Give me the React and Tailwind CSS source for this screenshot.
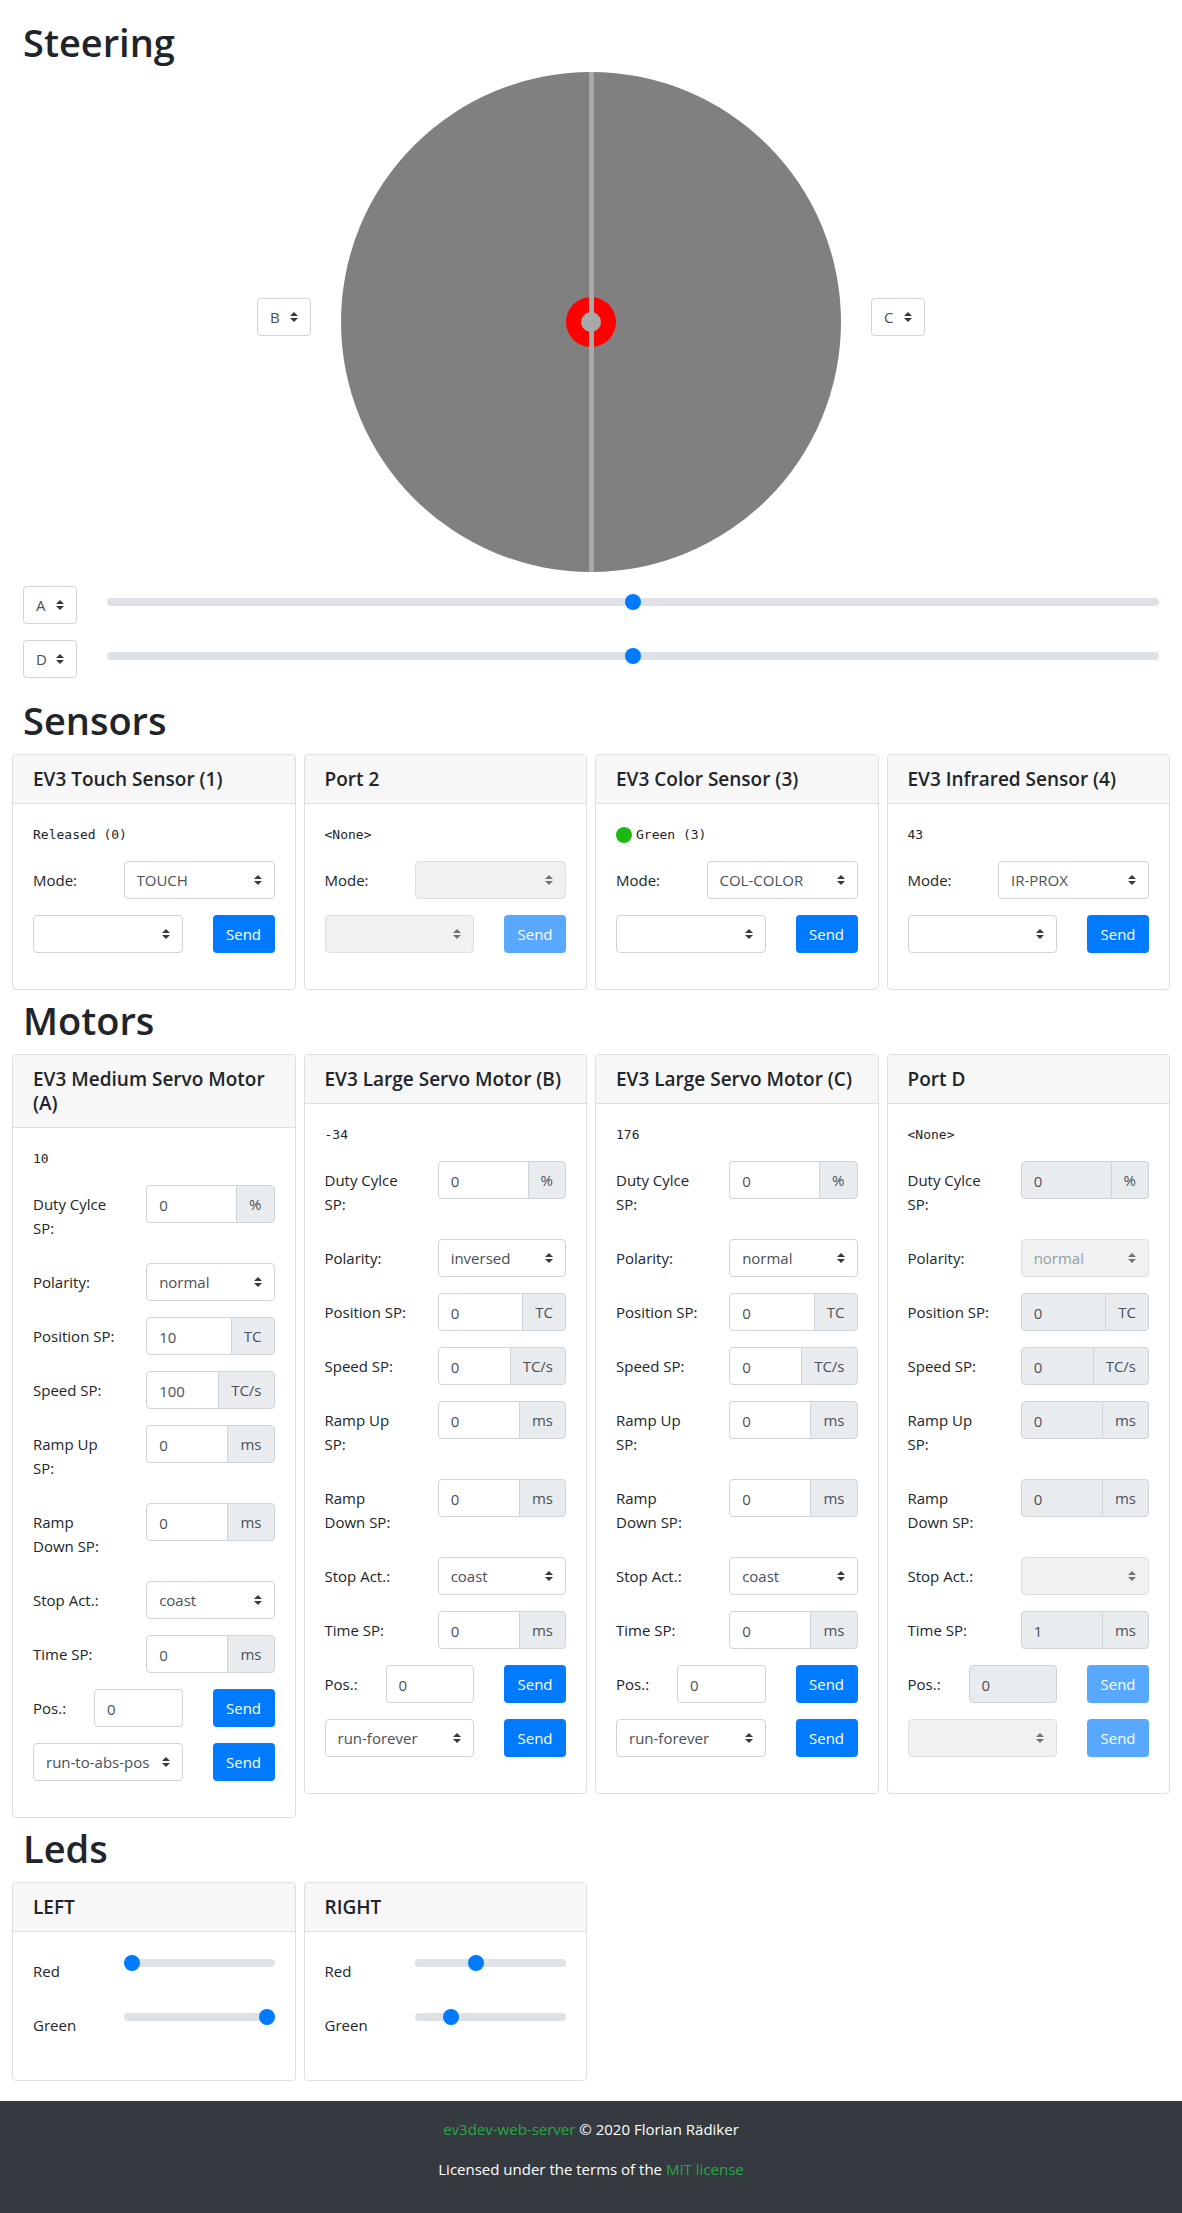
import { useId } from "react";

function Select({ value = "", options, disabled = false, label, id, className = "" }) {
  const items = options || [value];
  return (
    <div className={`relative ${disabled ? "opacity-70" : ""} ${className}`}>
      <select
        id={id}
        aria-label={label}
        defaultValue={value}
        disabled={disabled}
        className="block h-[38px] w-full appearance-none rounded border border-[#ced4da] bg-white pr-6 pl-3 text-[15px] leading-6 text-[#495057] disabled:bg-[#e9ecef] disabled:text-[#6c757d] disabled:opacity-100"
      >
        {items.map((o) => (
          <option key={o} value={o}>
            {o}
          </option>
        ))}
      </select>
      <svg
        viewBox="0 0 4 5"
        aria-hidden="true"
        className="pointer-events-none absolute top-[14px] right-[13px] h-[10px] w-2"
      >
        <path fill="#343a40" d="M2 0L0 2h4zm0 5L0 3h4z" />
      </svg>
    </div>
  );
}

function Range({ label, id, value, max = 100 }) {
  return (
    <input
      type="range"
      id={id}
      aria-label={label}
      min="0"
      max={max}
      defaultValue={value}
      className="block h-[22px] w-full appearance-none bg-transparent [&::-webkit-slider-runnable-track]:h-2 [&::-webkit-slider-runnable-track]:rounded-full [&::-webkit-slider-runnable-track]:bg-[#dee2e6] [&::-webkit-slider-thumb]:-mt-1 [&::-webkit-slider-thumb]:h-4 [&::-webkit-slider-thumb]:w-4 [&::-webkit-slider-thumb]:appearance-none [&::-webkit-slider-thumb]:rounded-full [&::-webkit-slider-thumb]:bg-[#007bff]"
    />
  );
}

function SendButton({ disabled }) {
  return (
    <button
      type="button"
      disabled={disabled}
      className="h-[38px] w-[62px] shrink-0 rounded bg-[#007bff] text-[15px] leading-6 text-white disabled:opacity-65"
    >
      Send
    </button>
  );
}

function Heading({ children }) {
  return <h1 className="px-[15px] pt-[2px] pb-[6px] text-[38px] leading-[48px] font-semibold">{children}</h1>;
}

function Card({ title, children }) {
  return (
    <section className="m-1 rounded border border-[#dfdfdf] bg-white">
      <header className="rounded-t-[3px] border-b border-[#dfdfdf] bg-[#f7f7f7] px-5 py-3">
        <h5 className="text-[19px] leading-6 font-semibold">{title}</h5>
      </header>
      <div className="p-5">{children}</div>
    </section>
  );
}

function Reading({ children }) {
  return (
    <pre className="mb-4 flex items-center font-['DejaVu_Sans_Mono',monospace] text-[13px] leading-[21px]">
      {children}
    </pre>
  );
}

function Cards({ children }) {
  return <div className="grid grid-cols-4 items-start">{children}</div>;
}

const labelClass = "py-[7px] leading-6";

function Sensor({ title, reading, dot, mode, disabled }) {
  const id = useId();
  return (
    <Card title={title}>
      <Reading>
        {dot && <span className="mr-1 h-4 w-4 rounded-full bg-[#1cba11]" />}
        {reading}
      </Reading>
      <div className="-mx-[15px] mb-4 flex">
        <div className="w-1/3 px-[15px]">
          <label htmlFor={id} className={`block ${labelClass}`}>
            Mode:
          </label>
        </div>
        <div className="w-2/3 px-[15px]">
          <Select id={id} value={mode} disabled={disabled} />
        </div>
      </div>
      <div className="mb-4 flex gap-[30px]">
        <Select label="Command" disabled={disabled} className="min-w-0 flex-1" />
        <SendButton disabled={disabled} />
      </div>
    </Card>
  );
}

const inputClass =
  "block h-[38px] w-full min-w-0 flex-1 border border-[#ced4da] bg-white px-3 pt-[7px] pb-[5px] text-[15px] leading-6 text-[#495057] disabled:bg-[#e9ecef]";

function Field({ label, value, unit, disabled }) {
  const id = useId();
  return (
    <div className="-mx-[15px] mb-4 flex">
      <div className="w-5/12 px-[15px]">
        <label htmlFor={id} className={`block ${labelClass}`}>
          {label}
        </label>
      </div>
      <div className="w-7/12 px-[15px]">
        {unit ? (
          <div className="flex">
            <input
              id={id}
              type="text"
              defaultValue={value}
              disabled={disabled}
              className={`${inputClass} rounded-l`}
            />
            <span className="-ml-px h-[38px] rounded-r border border-[#ced4da] bg-[#e9ecef] px-3 py-[6px] leading-6 text-[#495057]">
              {unit}
            </span>
          </div>
        ) : (
          <Select id={id} value={value} disabled={disabled} />
        )}
      </div>
    </div>
  );
}

function Motor({ title, reading, polarity, position, speed, stop, time, command, disabled }) {
  const id = useId();
  return (
    <Card title={title}>
      <Reading>{reading}</Reading>
      <Field label="Duty Cylce SP:" value="0" unit="%" disabled={disabled} />
      <Field label="Polarity:" value={polarity} disabled={disabled} />
      <Field label="Position SP:" value={position} unit="TC" disabled={disabled} />
      <Field label="Speed SP:" value={speed} unit="TC/s" disabled={disabled} />
      <Field label="Ramp Up SP:" value="0" unit="ms" disabled={disabled} />
      <Field label="Ramp Down SP:" value="0" unit="ms" disabled={disabled} />
      <Field label="Stop Act.:" value={stop} disabled={disabled} />
      <Field label="Time SP:" value={time} unit="ms" disabled={disabled} />
      <div className="mb-4 flex gap-[30px]">
        <label htmlFor={id} className={`w-[31px] shrink-0 whitespace-nowrap ${labelClass}`}>
          Pos.:
        </label>
        <input
          id={id}
          type="text"
          defaultValue="0"
          disabled={disabled}
          className={`${inputClass} rounded`}
        />
        <SendButton disabled={disabled} />
      </div>
      <div className="mb-4 flex gap-[30px]">
        <Select label="Command" value={command} disabled={disabled} className="min-w-0 flex-1" />
        <SendButton disabled={disabled} />
      </div>
    </Card>
  );
}

function LedRow({ label, value }) {
  const id = useId();
  return (
    <div className="-mx-[15px] mb-4 flex">
      <div className="w-1/3 px-[15px]">
        <label htmlFor={id} className={`block ${labelClass}`}>
          {label}
        </label>
      </div>
      <div className="w-2/3 px-[15px]">
        <Range id={id} value={value} />
      </div>
    </div>
  );
}

const ports = ["A", "B", "C", "D"];

function PortSelect({ value, label }) {
  return <Select value={value} label={label} options={ports} className="mb-4 w-[54px] shrink-0" />;
}

function PortSlider({ port }) {
  return (
    <div className="flex gap-[30px] px-[15px]">
      <PortSelect value={port} label={`Slider port ${port}`} />
      <div className="min-w-0 flex-1 pt-[5px]">
        <Range label={`Speed of port ${port}`} value={50} />
      </div>
    </div>
  );
}

export default function App() {
  return (
    <div className="bg-white font-['Open_Sans',sans-serif] text-[15px] leading-6 text-[#212529]">
      <main className="px-2 pt-4 pb-4">
        <Heading>Steering</Heading>
        <div className="mb-2 flex items-center justify-center gap-[30px]">
          <PortSelect value="B" label="Left motor port" />
          <div className="pb-[6px]">
            <svg
              width="500"
              height="500"
              viewBox="0 0 500 500"
              role="img"
              aria-label="Steering pad"
              className="h-auto max-w-full"
            >
              <circle cx="250" cy="250" r="250" fill="#808080" />
              <circle cx="250" cy="250" r="25" fill="#ff0000" />
              <circle cx="250" cy="250" r="10" fill="#a9a9a9" />
              <rect x="248" y="0" width="5" height="500" fill="#a9a9a9" />
            </svg>
          </div>
          <PortSelect value="C" label="Right motor port" />
        </div>
        <PortSlider port="A" />
        <PortSlider port="D" />

        <Heading>Sensors</Heading>
        <Cards>
          <Sensor title="EV3 Touch Sensor (1)" reading="Released (0)" mode="TOUCH" />
          <Sensor title="Port 2" reading="<None>" disabled />
          <Sensor title="EV3 Color Sensor (3)" reading="Green (3)" dot mode="COL-COLOR" />
          <Sensor title="EV3 Infrared Sensor (4)" reading="43" mode="IR-PROX" />
        </Cards>

        <Heading>Motors</Heading>
        <Cards>
          <Motor
            title="EV3 Medium Servo Motor (A)"
            reading="10"
            polarity="normal"
            position="10"
            speed="100"
            stop="coast"
            time="0"
            command="run-to-abs-pos"
          />
          <Motor
            title="EV3 Large Servo Motor (B)"
            reading="-34"
            polarity="inversed"
            position="0"
            speed="0"
            stop="coast"
            time="0"
            command="run-forever"
          />
          <Motor
            title="EV3 Large Servo Motor (C)"
            reading="176"
            polarity="normal"
            position="0"
            speed="0"
            stop="coast"
            time="0"
            command="run-forever"
          />
          <Motor
            title="Port D"
            reading="<None>"
            polarity="normal"
            position="0"
            speed="0"
            time="1"
            disabled
          />
        </Cards>

        <Heading>Leds</Heading>
        <Cards>
          <Card title="LEFT">
            <LedRow label="Red" value={0} />
            <LedRow label="Green" value={100} />
          </Card>
          <Card title="RIGHT">
            <LedRow label="Red" value={39} />
            <LedRow label="Green" value={21} />
          </Card>
        </Cards>
      </main>

      <footer className="bg-[#343a40] py-4 text-center text-white">
        <p className="mb-4">
          <a href="#server" className="text-[#28a745]">
            ev3dev-web-server
          </a>{" "}
          © 2020 Florian Rädiker
        </p>
        <p className="mb-4">
          Licensed under the terms of the{" "}
          <a href="#license" className="text-[#28a745]">
            MIT license
          </a>
        </p>
      </footer>
    </div>
  );
}
